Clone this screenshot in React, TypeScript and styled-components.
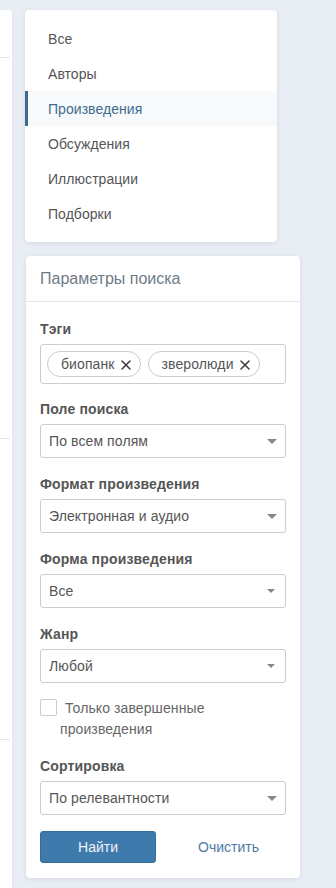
import React from "react";
import styled, { createGlobalStyle } from "styled-components";

const GlobalStyle = createGlobalStyle`
  html, body {
    margin: 0;
    padding: 0;
    background: #e9edf4;
    font-family: "Liberation Sans", Arial, sans-serif;
    font-size: 14px;
    color: #555;
  }
`;

const menuItems = [
  "Все",
  "Авторы",
  "Произведения",
  "Обсуждения",
  "Иллюстрации",
  "Подборки",
];

const selects = [
  { label: "Поле поиска", value: "По всем полям", big: true },
  { label: "Формат произведения", value: "Электронная и аудио", big: true },
  { label: "Форма произведения", value: "Все", big: false },
  { label: "Жанр", value: "Любой", big: false },
];

const tags = ["биопанк", "зверолюди"];

export default function App() {
  return (
    <>
      <GlobalStyle />
      <Page>
        <LeftStrip>
          <StripSection $h={47} />
          <StripSection $h={380} />
          <StripSection $h={300} />
        </LeftStrip>
        <Column>
          <MenuCard>
            {menuItems.map((item) => (
              <MenuItem key={item} $active={item === "Произведения"}>
                {item}
              </MenuItem>
            ))}
          </MenuCard>
          <SearchCard>
            <CardHeader>Параметры поиска</CardHeader>
            <CardBody>
              <Label>Тэги</Label>
              <TagBox>
                {tags.map((t) => (
                  <Tag key={t}>
                    {t}
                    <CloseIcon />
                  </Tag>
                ))}
              </TagBox>
              {selects.map((s) => (
                <React.Fragment key={s.label}>
                  <Label>{s.label}</Label>
                  <Select value={s.value} big={s.big} />
                </React.Fragment>
              ))}
              <CheckLabel>
                <CheckBox /> Только завершенные произведения
              </CheckLabel>
              <Label>Сортировка</Label>
              <Select value="По релевантности" big />
              <Actions>
                <PrimaryButton>Найти</PrimaryButton>
                <LinkButton>Очистить</LinkButton>
              </Actions>
            </CardBody>
          </SearchCard>
        </Column>
      </Page>
    </>
  );
}

function CloseIcon() {
  return (
    <CloseSvg viewBox="0 0 12 12" width="12" height="12">
      <path
        d="M2 2 L10 10 M10 2 L2 10"
        stroke="#3a3a3a"
        strokeWidth="1.5"
        strokeLinecap="round"
        fill="none"
      />
    </CloseSvg>
  );
}

function Select(props: { value: string; big?: boolean }) {
  return (
    <SelectBox>
      <span>{props.value}</span>
      <Caret $big={props.big} />
    </SelectBox>
  );
}

const Page = styled.div`
  display: flex;
  align-items: flex-start;
  gap: 13px;
  padding-top: 10px;
  min-height: 878px;
`;

const LeftStrip = styled.div`
  width: 12px;
  height: 878px;
  background: #fff;
  border-radius: 0 4px 0 0;
  box-shadow: 0 1px 3px rgba(60, 80, 110, 0.08);
`;

const StripSection = styled.div<{ $h: number }>`
  height: ${(p) => p.$h}px;
  border-bottom: 1px solid #e6e6e6;
  width: 10px;
`;

const Column = styled.div`
  display: flex;
  flex-direction: column;
  gap: 14px;
`;

const MenuCard = styled.div`
  width: 252px;
  background: #fff;
  border-radius: 4px;
  padding: 11px 0 11px;
  box-shadow: 0 1px 4px rgba(60, 80, 110, 0.12);
`;

const MenuItem = styled.div<{ $active?: boolean }>`
  height: 35px;
  display: flex;
  align-items: center;
  padding-left: ${(p) => (p.$active ? 20 : 23)}px;
  border-left: ${(p) => (p.$active ? "3px solid #3c6a8e" : "none")};
  background: ${(p) => (p.$active ? "#f8f9fa" : "transparent")};
  color: ${(p) => (p.$active ? "#3f6d8f" : "#555")};
  font-size: 14px;
  letter-spacing: 0.05px;
`;

const SearchCard = styled.div`
  width: 274px;
  margin-left: 1px;
  background: #fff;
  border-radius: 4px;
  box-shadow: 0 1px 4px rgba(60, 80, 110, 0.12);
`;

const CardHeader = styled.div`
  height: 45px;
  display: flex;
  align-items: center;
  padding: 0 14px;
  font-size: 16px;
  color: #6e7b88;
  border-bottom: 1px solid #e4e7ea;
`;

const CardBody = styled.div`
  padding: 17px 14px 15px;
`;

const Label = styled.div`
  font-weight: bold;
  font-size: 14px;
  line-height: 20px;
  color: #555;
  margin-bottom: 5px;
  letter-spacing: 0.15px;
`;

const TagBox = styled.div`
  height: 40px;
  box-sizing: border-box;
  border: 1px solid #ccc;
  border-radius: 3px;
  padding: 6px;
  display: flex;
  gap: 7px;
  margin-bottom: 15px;
`;

const Tag = styled.div`
  height: 26px;
  box-sizing: border-box;
  border: 1px solid #ccc;
  border-radius: 13px;
  padding: 0 8px 0 13px;
  display: flex;
  align-items: center;
  gap: 5px;
  color: #555;
  font-size: 14px;
  letter-spacing: 0.1px;
`;

const CloseSvg = styled.svg`
  display: block;
  margin-top: 2px;
`;

const SelectBox = styled.div`
  height: 34px;
  box-sizing: border-box;
  border: 1px solid #ccc;
  border-radius: 3px;
  padding: 0 8px 0 8px;
  display: flex;
  align-items: center;
  justify-content: space-between;
  color: #555;
  font-size: 14px;
  margin-bottom: 16px;
  letter-spacing: 0.1px;
`;

const Caret = styled.span<{ $big?: boolean }>`
  width: 0;
  height: 0;
  border-left: ${(p) => (p.$big ? 5 : 4)}px solid transparent;
  border-right: ${(p) => (p.$big ? 5 : 4)}px solid transparent;
  border-top: ${(p) => (p.$big ? 5 : 4)}px solid #888;
  margin-right: ${(p) => (p.$big ? 0 : 2)}px;
`;

const CheckLabel = styled.div`
  padding-left: 20px;
  line-height: 21px;
  font-size: 14px;
  color: #666;
  margin: -1px 0 16px;
  letter-spacing: 0.1px;
`;

const CheckBox = styled.span`
  display: inline-block;
  box-sizing: border-box;
  width: 17px;
  height: 17px;
  border: 1px solid #ccc;
  border-radius: 2px;
  margin-left: -20px;
  margin-right: 4px;
  vertical-align: -3px;
  background: #fff;
`;

const Actions = styled.div`
  display: flex;
  align-items: center;
`;

const PrimaryButton = styled.button`
  width: 116px;
  height: 32px;
  background: #3e7aab;
  border: 1px solid #356d9b;
  border-radius: 3px;
  color: #eef4fa;
  font-family: "Liberation Sans", Arial, sans-serif;
  font-size: 14px;
`;

const LinkButton = styled.button`
  background: none;
  border: none;
  color: #4d7aa3;
  font-family: "Liberation Sans", Arial, sans-serif;
  font-size: 14px;
  margin-left: 30px;
  padding: 0 12px;
`;
